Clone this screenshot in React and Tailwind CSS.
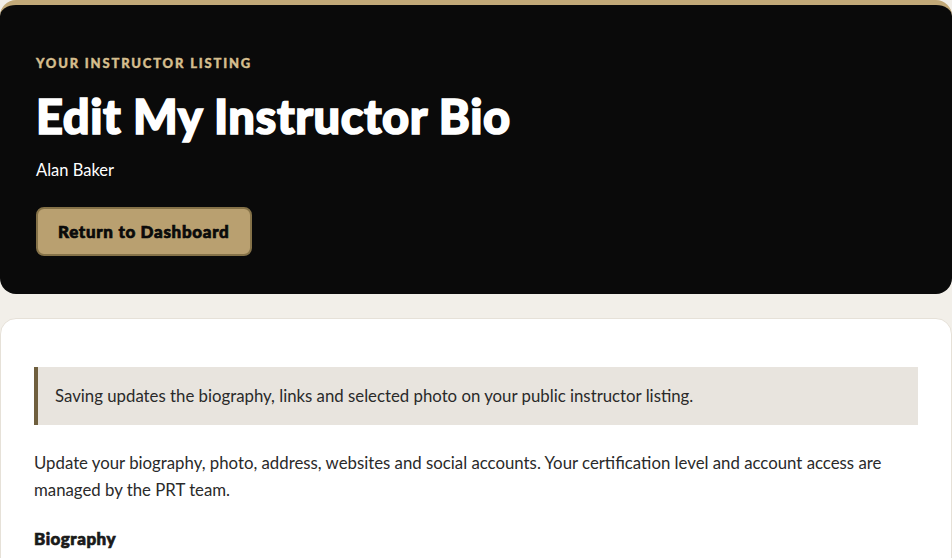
import React from 'react';

const base = { fontFamily: 'Lato, "Noto Sans", sans-serif' };

const App = () => {
  return (
    <div className="min-h-screen bg-[#f2efe9] text-[#222]" style={base}>
      {/* Header */}
      <div className="bg-[#0a0a0a] border-t-[5px] border-[#c2a978] rounded-2xl px-9 pt-[50px] pb-[38px]">
        <p className="text-[13px] leading-4 font-black tracking-[0.14em] uppercase text-[#d5be8e] [-webkit-text-stroke:0.4px_#d5be8e]">
          Your Instructor Listing
        </p>
        <h1 className="mt-[19px] text-[47px] leading-[52px] font-black tracking-[0.012em] text-white [-webkit-text-stroke:1.6px_white]">
          Edit My Instructor Bio
        </h1>
        <p className="mt-[16px] text-[16.5px] leading-6 text-white">Alan Baker</p>
        <button className="mt-[25px] h-[49px] px-5 rounded-lg bg-[#b9a070] border-2 border-[#857248] text-[17px] font-black tracking-[0.04em] text-[#0a0a0a] [-webkit-text-stroke:0.7px_#0a0a0a]">
          Return to Dashboard
        </button>
      </div>

      {/* Body card */}
      <div className="mt-[24px] bg-white border border-[#e6e1d8] rounded-2xl px-[33px] pt-[48px] pb-8">
        <div className="bg-[#e8e4de] border-l-4 border-[#6f5f3e] h-[58px] flex items-center pl-[17px]">
          <p className="text-[16.8px] text-[#2a2a2a]">
            Saving updates the biography, links and selected photo on your public instructor listing.
          </p>
        </div>
        <p className="mt-[24px] text-[16.8px] leading-[27px] text-[#2a2a2a] pr-6">
          Update your biography, photo, address, websites and social accounts. Your certification level and account access are managed by the PRT team.
        </p>
        <h2 className="mt-[23px] text-[17px] font-black tracking-[0.03em] text-[#1a1a1a] [-webkit-text-stroke:0.7px_#1a1a1a]">Biography</h2>
      </div>
    </div>
  );
};

export default App;
